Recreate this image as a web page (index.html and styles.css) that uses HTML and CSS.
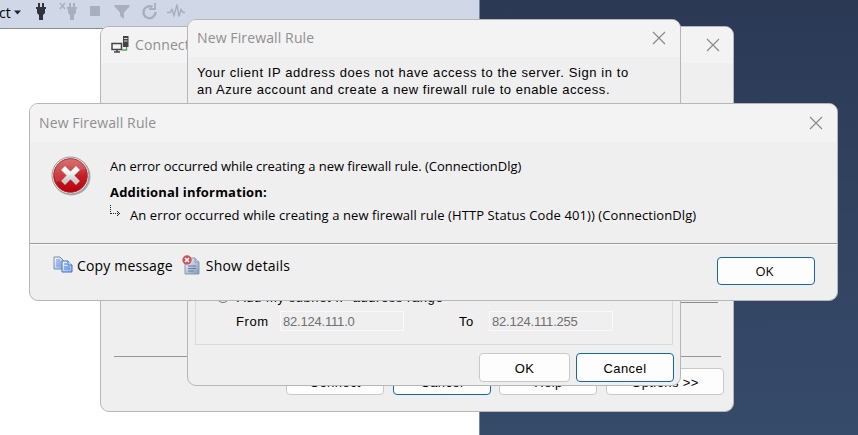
FILE: index.html
```html
<!DOCTYPE html>
<html lang="en">
<head>
<meta charset="utf-8">
<title>New Firewall Rule</title>
<link rel="stylesheet" href="styles.css">
</head>
<body>
<div class="desktop">
  <main class="editor">
    <div class="toolbar">
      <span class="connect-menu">ct</span>
      <svg class="tools" width="190" height="28" viewBox="0 0 190 28">
        <path d="M14 10.500h7L17.500 14.500z" fill="#1f2430"/>
        <g fill="#30333b"><path d="M38 3h2v4h2V3h2v4h2v2h-1v4l-2 2v5h-4v-5l-2-2V9h-1V7h2z"/></g>
        <g fill="#a9afbf"><path d="M69 3h2v4h2V3h2v4h2v2h-1v4l-2 2v5h-4v-5l-2-2V9h-1V7h2z"/><path d="M60 3l5 6M65 3l-5 6" stroke="#a9afbf" stroke-width="1.300"/>
        <path d="M90 6h10v10H90zM114.500 5h15v1.500L124 12.500V19l-4-3v-3.500l-5.500-6z"/></g>
        <g fill="none" stroke="#a9afbf"><path d="M152.500 7a6 6 0 1 0 3 5" stroke-width="2.500"/><path d="M155 3v6h-6" stroke-width="1.800"/><path d="M167 12.500h3l2-3 2 6 3-11 2 12 2-7 2 3h2" stroke-width="1.500"/></g>
      </svg>
    </div>
  </main>

  <section class="window server-window">
    <header class="titlebar">
      <svg class="server-icon" width="19" height="19" viewBox="0 0 19 19">
        <path d="M1 8.500h9.500v6H1z" fill="#f4f4f4" stroke="#454545" stroke-width="1.500"/><path d="M3 17h6M6 14v3" stroke="#454545" stroke-width="1.500"/><path d="M12 1h5.500v11H12z" fill="#444"/><path d="M13 3.500h3.500M13 6h3.500" stroke="#ddd"/><path d="M15.500 12v3H11" fill="none" stroke="#58a65c" stroke-width="1.300"/>
      </svg>
      <h2 class="title">Connect</h2>
      <svg class="close" width="14" height="14" viewBox="0 0 14 14"><path d="M1 1l12 12M13 1L1 13"/></svg>
    </header>
    <div class="server-body"><div class="field-edge"></div></div>
    <div class="actions server-actions">
      <button class="button">Connect</button><button class="button default">Cancel</button><button class="button">Help</button><button class="button wide">Options &gt;&gt;</button>
    </div>
  </section>

  <section class="window rule-window">
    <header class="titlebar">
      <h2 class="title">New Firewall Rule</h2>
      <svg class="close" width="14" height="14" viewBox="0 0 14 14"><path d="M1 1l12 12M13 1L1 13"/></svg>
    </header>
    <p class="rule-text"><span class="line-one">Your client IP address does not have access to the server. Sign in to</span><br><span class="line-two">an Azure account and create a new firewall rule to enable access.</span></p>
    <div class="group">
      <label class="choice"><span class="radio"></span><span>Add my subnet IP address range</span></label>
      <div class="range"><span class="from">From</span><span class="input">82.124.111.0</span><span class="to">To</span><span class="input">82.124.111.255</span></div>
    </div>
    <div class="actions rule-actions"><button class="button">OK</button><button class="button default">Cancel</button></div>
  </section>

  <section class="window error-window">
    <header class="titlebar">
      <h2 class="title">New Firewall Rule</h2>
      <svg class="close" width="14" height="14" viewBox="0 0 14 14"><path d="M1 1l12 12M13 1L1 13"/></svg>
    </header>
    <div class="message">
      <svg class="error-icon" width="40" height="40" viewBox="0 0 40 40">
        <defs><linearGradient id="red" x2="0" y2="1"><stop stop-color="#d36b6a"/><stop offset=".5" stop-color="#c42027"/><stop offset="1" stop-color="#b9000b"/></linearGradient><linearGradient id="cross" x2="0" y2="1"><stop stop-color="#fff"/><stop offset="1" stop-color="#ccc"/></linearGradient></defs>
        <circle cx="20.500" cy="20.500" r="19" fill="#aaa"/><circle cx="19.500" cy="19.500" r="18.500" fill="#eee" stroke="#999"/><circle cx="19.500" cy="19.500" r="16.800" fill="url(#red)" stroke="#a62328"/>
        <path d="M3 19C4 9 11 3 20 3c8 0 13 4 15 10C25 13 22 23 5 26z" fill="#e08080" opacity=".3"/>
        <path d="M14 14l11 11M25 14l-11 11" stroke="url(#cross)" stroke-width="5.500" stroke-linecap="square"/>
      </svg>
      <div class="message-text">
        <p class="primary">An error occurred while creating a new firewall rule. (ConnectionDlg)</p>
        <p class="info">Additional information:</p>
        <div class="detail"><svg width="12" height="12" viewBox="0 0 12 12" fill="none" stroke="#222"><path d="M.5 0v9M1 8.500h9" stroke-dasharray="1 1"/><path d="M7 6l2.500 2.500L7 11"/></svg><span>An error occurred while creating a new firewall rule (HTTP Status Code 401)) (ConnectionDlg)</span></div>
      </div>
    </div>
    <footer class="error-footer">
      <div class="command copy">
        <svg width="20" height="18" viewBox="0 0 20 18"><defs><linearGradient id="page" x2="1" y2="1"><stop stop-color="#fff"/><stop offset="1" stop-color="#83aef0"/></linearGradient></defs><path d="M1 1h6l3 3v9H1z" fill="url(#page)" stroke="#7b8caf"/><path d="M3 4h4M3 6h5M3 8h5M3 10h5" stroke="#7895cb"/><path d="M9 5h6l4 4v7H9z" fill="url(#page)" stroke="#466fc7"/><path d="M15 5v4h4" fill="#dcebff" stroke="#466fc7"/><path d="M11 8h3M11 11h6M11 13h6" stroke="#4c80dc"/></svg>
        <span>Copy message</span>
      </div>
      <div class="command details">
        <svg width="18" height="20" viewBox="0 0 18 20"><defs><linearGradient id="sheet" x2="1" y2="1"><stop stop-color="#fff"/><stop offset="1" stop-color="#7d92ba"/></linearGradient></defs><path d="M3 3h10l4 4v12H3z" fill="url(#sheet)" stroke="#8998ae"/><path d="M13 3v4h4" fill="#c4d2e6" stroke="#8998ae"/><path d="M6 11h8M6 13.500h8M6 16h6" stroke="#627e9d"/><circle cx="5" cy="5" r="4.700" fill="#d15258"/><path d="M3 3l4 4M7 3L3 7" stroke="#fff" stroke-width="1.600"/></svg>
        <span>Show details</span>
      </div>
      <button class="button default error-ok">OK</button>
    </footer>
  </section>
</div>
</body>
</html>
```
FILE: styles.css
```css
* { box-sizing: border-box; }
body { margin: 0; overflow: hidden; }
h2, p { margin: 0; font-weight: 400; }
svg { display: block; flex: none; }
.desktop { position: relative; width: 858px; height: 435px; overflow: hidden; background: linear-gradient(#2b3955, #31425f 45%, #364a6a); color: #000; font: 13px "Liberation Sans", Arial, sans-serif; white-space: nowrap; }
.editor { width: 480px; height: 435px; background: #fff; border-right: 1px solid #7784a0; }
.toolbar { display: flex; height: 29px; background: #d0d7e7; border-bottom: 1px solid #858b9a; }
.connect-menu { width: 0; padding-top: 4px; font: 14px "Open Sans", sans-serif; line-height: 18px; text-indent: -1px; overflow: visible; }
.window { position: absolute; display: flex; flex-direction: column; background: #efefef; border: 1px solid #b5b6b8; border-radius: 9px; overflow: hidden; }
.server-window { left: 100px; top: 26px; width: 634px; height: 386px; }
.rule-window { left: 187px; top: 19px; width: 494px; height: 367px; }
.error-window { left: 29px; top: 103px; width: 809px; height: 198px; }
.titlebar { display: flex; flex: none; align-items: center; height: 37px; padding: 0 14px 0 9px; background: #f3f3f3; color: #8f8f8f; }
.server-window .titlebar { height: 36px; padding: 0 13px 1px 10px; }
.rule-window .titlebar { padding-bottom: 1px; }
.title { flex: 1; font: 14px "Open Sans", sans-serif; line-height: 20px; letter-spacing: .12px; }
.close { stroke: #888; stroke-width: 1.1; fill: none; }
.server-icon { margin-right: 5px; }
.button { width: 98px; height: 28px; padding: 0; border: 1px solid #c9c9c9; border-radius: 4px; background: #fdfdfd; color: #000; font: 13px "Liberation Sans", sans-serif; letter-spacing: .4px; }
.button.default { border-color: #1268b0; }
.button.wide { width: 118px; }
.actions { display: flex; justify-content: flex-end; }
.server-body { flex: 1; margin: 0 12px 0 13px; border-bottom: 1px solid #979797; }
.field-edge { width: 160px; height: 240px; margin: 0 3px 0 auto; border-bottom: 1px solid #888; }
.server-actions { height: 54px; gap: 8.600px; padding: 11px 9px 0 0; }
.server-actions .button { height: 27px; padding-top: 2px; }
.rule-text { padding: 7px 0 0 9px; line-height: 17px; }
.line-one { letter-spacing: .58px; }
.line-two { letter-spacing: .54px; }
.group { margin: 6px 7px 0; height: 241px; padding-top: 184px; border: 1px solid #dadada; display: flex; flex-direction: column; }
.choice { display: flex; height: 16px; margin-left: 20px; gap: 7px; line-height: 18px; letter-spacing: .57px; }
.radio { width: 14px; height: 14px; border: 1px solid #777; border-radius: 50%; }
.range { display: flex; align-items: center; height: 20px; margin-top: 6px; padding-left: 40px; letter-spacing: .6px; }
.from { width: 44px; }
.input { width: 124px; height: 20px; padding-left: 2px; border: 1px solid #fafafa; color: #707070; line-height: 19px; letter-spacing: -.2px; }
.to { width: 85px; padding-left: 55px; }
.rule-actions { gap: 6px; padding: 8px 6px 0 0; }
.rule-actions .button { height: 29px; padding-top: 1px; }
.rule-actions .button:first-child { width: 91px; }
.error-window .titlebar { height: 38px; }
.message { display: flex; height: 101px; padding-left: 21px; }
.error-icon { margin-top: 14px; }
.message-text { padding: 14px 0 0 19px; font: 13px "Open Sans", sans-serif; line-height: 20px; }
.primary { letter-spacing: -.03px; }
.info { padding-top: 6px; font-weight: 700; letter-spacing: .18px; }
.detail { display: flex; gap: 8px; padding-top: 3px; letter-spacing: .09px; }
.error-footer { display: flex; height: 57px; border-top: 1px solid #999; box-shadow: inset 0 1px #fafafa; padding-left: 23px; font: 14px "Open Sans", sans-serif; }
.command { display: flex; gap: 4px; }
.copy { letter-spacing: .16px; }
.command svg { margin-top: 12px; }
.command span { padding-top: 12px; line-height: 20px; }
.details { margin-left: 9px; gap: 6px; letter-spacing: .18px; }
.details svg { margin-top: 11px; }
.error-ok { margin: 13px 22px 0 auto; padding: 0 3px 0 0; font: 13px "Open Sans", sans-serif; letter-spacing: 0; }
```
